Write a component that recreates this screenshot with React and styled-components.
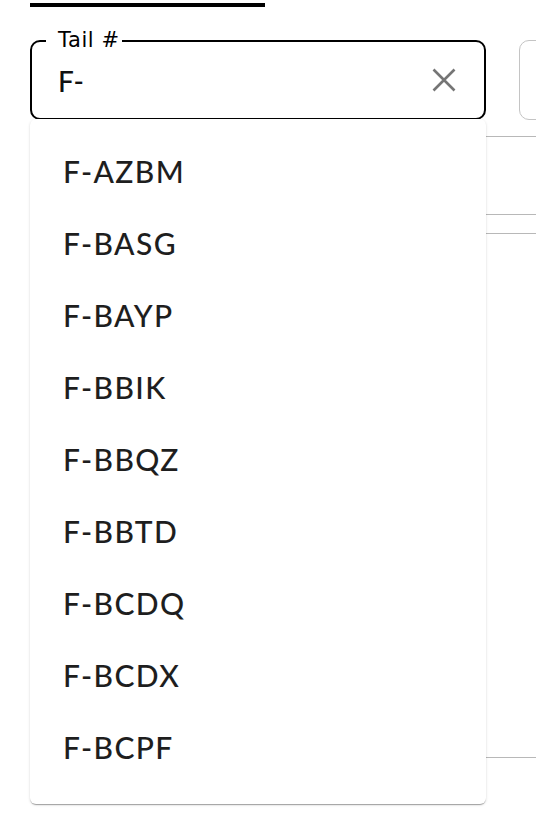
import styled, { createGlobalStyle } from 'styled-components';

const GlobalStyle = createGlobalStyle`
  html, body {
    margin: 0;
    padding: 0;
    background: #fff;
    overflow: hidden;
  }
  body {
    font-family: Lato, "Liberation Sans", sans-serif;
    color: #212121;
  }
`;

const Page = styled.div`
  width: 536px;
  height: 836px;
  overflow: hidden;
  padding-left: 30px;
  box-sizing: border-box;
`;

const TabIndicator = styled.div`
  width: 235px;
  height: 4px;
  margin-top: 3px;
  background: #000;
`;

const FilterRow = styled.div`
  display: flex;
  gap: 33px;
  margin-top: 33px;
  position: relative;
  z-index: 2;
`;

const Field = styled.div`
  position: relative;
  flex: none;
  width: ${(p) => p.width}px;
  height: 80px;
  box-sizing: border-box;
  border: ${(p) => (p.focused ? '2px solid #000' : '1.5px solid #c4c4c4')};
  border-radius: 10px;
  display: flex;
  align-items: center;
  padding: 0 28px 0 26px;
  background: #fff;
`;

const FloatingLabel = styled.label`
  position: absolute;
  left: 14px;
  top: -14px;
  padding: 0 2px 0 12px;
  background: #fff;
  font-family: "DejaVu Sans", Lato, sans-serif;
  font-size: 21px;
  line-height: 24px;
  letter-spacing: 0.6px;
  color: #000;
`;

const InputText = styled.input`
  flex: 1;
  border: none;
  outline: none;
  background: transparent;
  font-family: Lato, "Liberation Sans", sans-serif;
  font-size: 28px;
  font-weight: 500;
  color: #111;
  padding: 0;
  margin-top: 2px;
`;

const ClearButton = styled.button`
  border: none;
  background: transparent;
  padding: 0;
  width: 24px;
  height: 24px;
  display: flex;
  align-items: center;
  justify-content: center;
  cursor: pointer;
`;

const Listbox = styled.ul`
  position: absolute;
  top: calc(100% + 1px);
  left: -2px;
  right: -2px;
  margin: 0;
  padding: 16px 0 21px;
  list-style: none;
  background: #fff;
  border-radius: 6px;
  box-shadow: 0 2px 1px -1px rgba(0, 0, 0, 0.2), 0 1px 1px 0 rgba(0, 0, 0, 0.14),
    0 1px 3px 0 rgba(0, 0, 0, 0.12);
`;

const Option = styled.li`
  height: 72px;
  display: flex;
  align-items: center;
  padding-left: 33px;
  font-size: 30px;
  font-weight: 500;
  letter-spacing: 1.4px;
  color: #1e1e1e;
`;

const Table = styled.div`
  margin-top: 16px;
  width: 506px;
`;

const TableRow = styled.div`
  height: ${(p) => p.h}px;
  border-bottom: 1px solid #b8b8b8;
  box-sizing: border-box;
`;

const tails = [
  'F-AZBM',
  'F-BASG',
  'F-BAYP',
  'F-BBIK',
  'F-BBQZ',
  'F-BBTD',
  'F-BCDQ',
  'F-BCDX',
  'F-BCPF',
];

function CloseIcon() {
  return (
    <svg width="24" height="24" viewBox="0 0 24 24">
      <path d="M1.5 1.5 L22.5 22.5 M22.5 1.5 L1.5 22.5" stroke="#757575" strokeWidth="2.6" fill="none" />
    </svg>
  );
}

export default function App() {
  return (
    <>
      <GlobalStyle />
      <Page>
        <TabIndicator />
        <FilterRow>
          <Field width={456} focused>
            <FloatingLabel htmlFor="tail">Tail #</FloatingLabel>
            <InputText id="tail" defaultValue="F-" />
            <ClearButton type="button" aria-label="Clear">
              <CloseIcon />
            </ClearButton>
            <Listbox role="listbox">
              {tails.map((t) => (
                <Option key={t} role="option">{t}</Option>
              ))}
            </Listbox>
          </Field>
          <Field width={220} />
        </FilterRow>
        <Table>
          <TableRow h={1} />
          <TableRow h={78} />
          <TableRow h={19} />
          <TableRow h={524} />
        </Table>
      </Page>
    </>
  );
}
